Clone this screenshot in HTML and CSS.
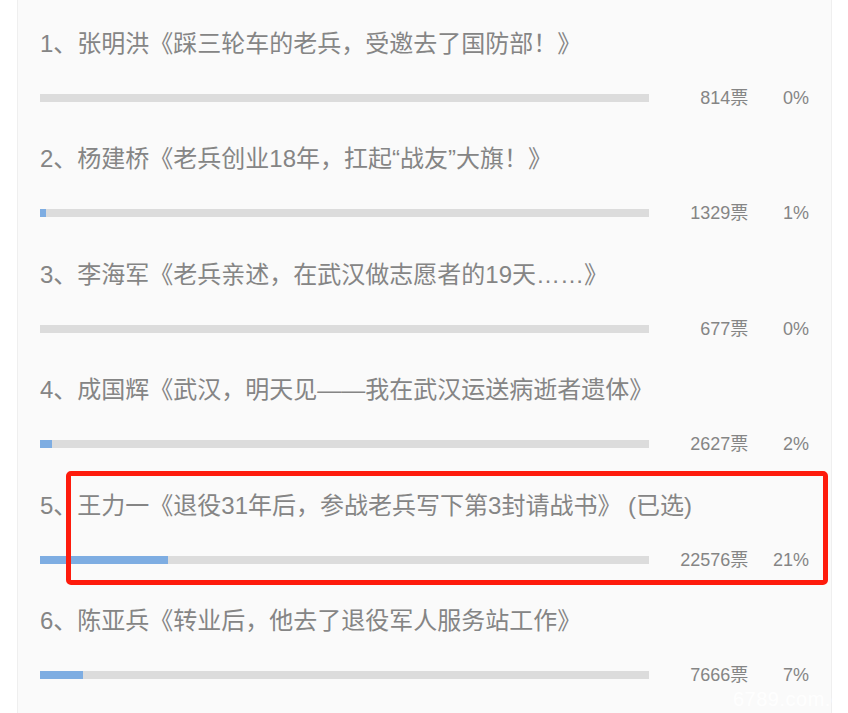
FILE: index.html
```html
<!DOCTYPE html>
<html lang="zh-CN">
<head>
<meta charset="utf-8">
<title>投票结果</title>
<link rel="stylesheet" href="styles.css">
</head>
<body>
<div class="panel">
  <div class="item">
    <div class="title">1、张明洪《踩三轮车的老兵，受邀去了国防部！》</div>
    <div class="row"><div class="bar"><div class="fill" style="width:0%"></div></div><span class="votes">814票</span><span class="pct">0%</span></div>
  </div>
  <div class="item">
    <div class="title">2、杨建桥《老兵创业18年，扛起“战友”大旗！》</div>
    <div class="row"><div class="bar"><div class="fill" style="width:1%"></div></div><span class="votes">1329票</span><span class="pct">1%</span></div>
  </div>
  <div class="item">
    <div class="title">3、李海军《老兵亲述，在武汉做志愿者的19天……》</div>
    <div class="row"><div class="bar"><div class="fill" style="width:0%"></div></div><span class="votes">677票</span><span class="pct">0%</span></div>
  </div>
  <div class="item">
    <div class="title">4、成国辉《武汉，明天见——我在武汉运送病逝者遗体》</div>
    <div class="row"><div class="bar"><div class="fill" style="width:2%"></div></div><span class="votes">2627票</span><span class="pct">2%</span></div>
  </div>
  <div class="item selected">
    <div class="title">5、王力一《退役31年后，参战老兵写下第3封请战书》 (已选)</div>
    <div class="row"><div class="bar"><div class="fill" style="width:21%"></div></div><span class="votes">22576票</span><span class="pct">21%</span></div>
    <div class="highlight"></div>
  </div>
  <div class="item">
    <div class="title">6、陈亚兵《转业后，他去了退役军人服务站工作》</div>
    <div class="row"><div class="bar"><div class="fill" style="width:7%"></div></div><span class="votes">7666票</span><span class="pct">7%</span></div>
  </div>
</div>
<div class="watermark">6789.com.c</div>
</body>
</html>
```
FILE: styles.css
```css
html, body {
  margin: 0;
  padding: 0;
  background: #ffffff;
  height: 713px;
  overflow: hidden;
}
body {
  position: relative;
  font-family: "Liberation Sans", "Noto Sans CJK SC", sans-serif;
  color: #888888;
}
.panel {
  margin-left: 17px;
  width: 815px;
  height: 713px;
  background: #fafafa;
  border-left: 1px solid #efefef;
  border-right: 1px solid #efefef;
  padding: 0 22px;
  box-sizing: border-box;
}
.item {
  position: relative;
  height: 115.4px;
  padding-top: 26px;
  box-sizing: border-box;
}
.title {
  font-size: 24px;
  line-height: 36px;
  height: 36px;
  white-space: nowrap;
  color: #858585;
}
.row {
  margin-top: 24px;
  height: 24px;
  display: flex;
  align-items: center;
}
.bar {
  width: 609px;
  height: 8px;
  background: #dcdcdc;
  flex: none;
}
.fill {
  height: 100%;
  background: #7eade2;
}
.votes, .pct {
  font-size: 18px;
  line-height: 24px;
  text-align: right;
  color: #858585;
}
.votes {
  width: 100px;
}
.pct {
  width: 61px;
}
.highlight {
  position: absolute;
  left: 26px;
  top: 9px;
  width: 762px;
  height: 114px;
  border: 5px solid #fe1b0c;
  border-radius: 5px;
  box-sizing: border-box;
}
.watermark {
  position: absolute;
  left: 733px;
  top: 689px;
  font-size: 20px;
  line-height: 20px;
  letter-spacing: 0.5px;
  color: rgba(255, 255, 255, 0.95);
  white-space: nowrap;
}
```
